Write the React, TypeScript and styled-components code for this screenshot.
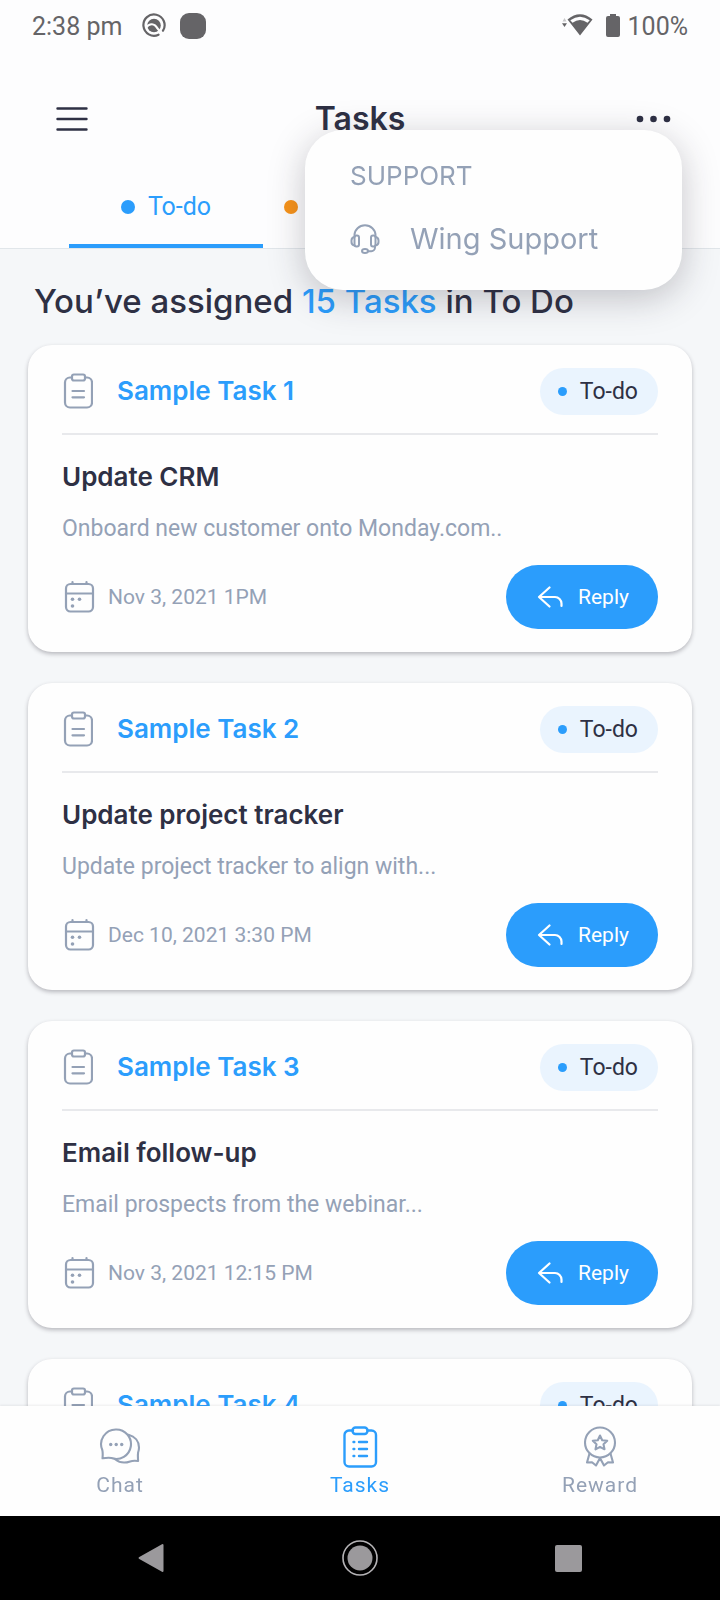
import React from "react";
import styled, { createGlobalStyle } from "styled-components";

const blue = "#2b9dfc";
const ink = "#2e3044";
const muted = "#94a1b6";
const display = `Inter, "Liberation Sans", sans-serif`;

const GlobalStyle = createGlobalStyle`
  *, *::before, *::after { box-sizing: border-box; }
  body { margin: 0; font-family: Roboto, "Liberation Sans", sans-serif; color: ${ink}; background: #fdfdfe; }
  button { border: 0; padding: 0; background: none; font: inherit; color: inherit; cursor: pointer; }
  h1, h2, h3, p { margin: 0; }
  svg { display: block; flex: none; }
`;

const Screen = styled.div`
  display: flex;
  flex-direction: column;
  height: 100vh;
  overflow: hidden;
`;

const StatusBar = styled.div`
  display: flex;
  align-items: center;
  justify-content: space-between;
  height: 52px;
  padding: 0 32px;
  font-size: 25px;
  color: #656467;
`;

const StatusGroup = styled.div<{ $gap: number }>`
  display: flex;
  align-items: center;
  gap: ${({ $gap }) => $gap}px;
`;

const Header = styled.header`
  position: relative;
  z-index: 2;
  border-bottom: 1px solid #e1e6ea;
`;

const AppBar = styled.div`
  display: grid;
  grid-template-columns: 48px 1fr 48px;
  align-items: center;
  height: 134px;
  padding: 0 48px;
`;

const IconButton = styled.button<{ $width?: number }>`
  display: grid;
  place-items: center;
  justify-self: ${({ $width }) => ($width ? "end" : "auto")};
  width: ${({ $width = 48 }) => $width}px;
  height: 48px;
`;

const Title = styled.h1`
  font: 600 32px/40px ${display};
  text-align: center;
`;

const Tabs = styled.div`
  display: flex;
  padding-left: 69px;
`;

const Tab = styled.button<{ $active?: boolean }>`
  display: flex;
  align-items: center;
  justify-content: ${({ $active }) => ($active ? "center" : "flex-start")};
  gap: 13px;
  width: 194px;
  height: 62px;
  padding: 6px 21px 22px;
  border-bottom: 4px solid ${({ $active }) => ($active ? blue : "transparent")};
  font-size: 25px;
  line-height: 30px;
  color: ${blue};
`;

const Dot = styled.span<{ $size: number; $color: string }>`
  flex: none;
  width: ${({ $size }) => $size}px;
  height: ${({ $size }) => $size}px;
  border-radius: 50%;
  background: ${({ $color }) => $color};
`;

const Menu = styled.div`
  position: absolute;
  top: 78px;
  right: 38px;
  width: 377px;
  padding: 28px 45px 31px;
  border-radius: 38px;
  background: #fefefe;
  box-shadow: 0 8px 36px rgba(40, 36, 50, 0.26);
  color: ${muted};
`;

const MenuHeading = styled.h2`
  font: 400 26px/36px ${display};
`;

const MenuItem = styled.button`
  display: flex;
  align-items: center;
  gap: 30px;
  margin-top: 25px;
  font: 400 29px/40px ${display};
`;

const Content = styled.main`
  flex: 1;
  min-height: 0;
  overflow-y: auto;
  scrollbar-width: none;
  padding: 32px 28px 0;
  background: #f5f7f9;
`;

const Summary = styled.h2`
  padding: 0 6px;
  margin-bottom: 24px;
  font: 500 33px/40px ${display};
`;

const Accent = styled.span`
  color: ${blue};
`;

const CardList = styled.div`
  display: flex;
  flex-direction: column;
  gap: 31px;
`;

const Card = styled.article`
  padding: 0 34px 23px;
  border-radius: 24px;
  background: #fefefe;
  box-shadow: 0 2px 4px rgba(40, 36, 50, 0.3);
`;

const CardHeader = styled.div`
  display: flex;
  align-items: center;
  gap: 24px;
  height: 90px;
  padding-top: 4px;
  border-bottom: 2px solid #e8e9ec;
`;

const CardName = styled.h3`
  flex: 1;
  font: 600 26px/36px ${display};
  color: ${blue};
`;

const Badge = styled.span`
  display: flex;
  align-items: center;
  gap: 13px;
  height: 47px;
  padding: 0 20px 0 18px;
  border-radius: 24px;
  background: #eaf4fe;
  font-size: 23px;
`;

const CardTitle = styled.p`
  margin-top: 24px;
  font: 600 26px/36px ${display};
`;

const Description = styled.p`
  margin-top: 18px;
  font-size: 23px;
  line-height: 32px;
  color: ${muted};
`;

const CardFooter = styled.div`
  display: flex;
  align-items: center;
  justify-content: space-between;
  margin-top: 20px;
`;

const DateLabel = styled.div`
  display: flex;
  align-items: center;
  gap: 12px;
  font-size: 21px;
  color: ${muted};
`;

const ReplyButton = styled.button`
  display: flex;
  align-items: center;
  justify-content: center;
  gap: 15px;
  width: 152px;
  height: 64px;
  padding-left: 2px;
  border-radius: 32px;
  background: ${blue};
  font-size: 21px;
  color: #fff;
`;

const BottomNav = styled.nav`
  position: relative;
  display: grid;
  grid-template-columns: repeat(3, 1fr);
  padding: 20px 0 17px;
  background: #fefefe;
  box-shadow: 0 -1px 2px rgba(40, 36, 50, 0.08);
`;

const NavItem = styled.button<{ $active?: boolean }>`
  display: flex;
  flex-direction: column;
  align-items: center;
  gap: 3px;
  font-size: 21px;
  line-height: 28px;
  letter-spacing: 1px;
  color: ${({ $active }) => ($active ? blue : muted)};
`;

const SystemBar = styled.div`
  display: grid;
  grid-template-columns: repeat(3, 29%);
  justify-content: center;
  justify-items: center;
  align-items: center;
  height: 84px;
  background: #000;
`;

const line = { fill: "none", stroke: "currentColor", strokeLinecap: "round", strokeLinejoin: "round" } as const;

const ClipboardIcon = () => (
  <svg width="31" height="36" viewBox="0 0 31 36" {...line} strokeWidth="2.200" color={muted}>
    <path d="M9.500 4.500H8a5 5 0 0 0-5 5v20a5 5 0 0 0 5 5h17a5 5 0 0 0 5-5v-20a5 5 0 0 0-5-5h-2" />
    <rect x="10" y="1.500" width="13" height="6" rx="2" />
    <path d="M10.500 18H22M10.500 24.300H22" />
  </svg>
);

const CalendarIcon = () => (
  <svg width="34" height="34" viewBox="0 0 34 34" {...line} strokeWidth="2.200" color={muted}>
    <rect x="4" y="4" width="27" height="27.500" rx="4.500" />
    <path d="M4 13.500h27M10.500 2v2M24.500 2v2" />
    <g fill="currentColor" stroke="none">
      <circle cx="10.500" cy="19.300" r="1.800" />
      <circle cx="17.500" cy="19.300" r="1.800" />
      <circle cx="10.500" cy="26" r="1.800" />
    </g>
  </svg>
);

const ReplyIcon = () => (
  <svg width="26" height="22" viewBox="0 0 26 22" {...line} strokeWidth="2.200">
    <path d="M12.500 1.500 2 11l10.500 9.500M2 11h16a6.500 6.500 0 0 1 6.500 6.500v2.500" />
  </svg>
);

const HeadsetIcon = () => (
  <svg width="30" height="30" viewBox="0 0 30 30" {...line} strokeWidth="2">
    <path d="M4.500 12.500V11a10.500 9.700 0 0 1 21 0v1.500" />
    <rect x="4.500" y="11.500" width="4.500" height="11" rx="2" />
    <rect x="21" y="11.500" width="4.500" height="11" rx="2" />
    <path d="M4.500 13a3.500 3.500 0 0 0-3 3.500v1.500a3.500 3.500 0 0 0 3 3.500M25.500 13a3.500 3.500 0 0 1 3 3.500v1.500a3.500 3.500 0 0 1-3 3.500M25 22.500v1a3.700 3.700 0 0 1-3.700 3.700H18" />
    <ellipse cx="15" cy="27" rx="3" ry="1.900" />
  </svg>
);

const ChatIcon = () => (
  <svg width="42" height="42" viewBox="0 0 42 42" {...line} strokeWidth="2.100">
    <path d="M17 3.500a14.700 14.700 0 1 1-4.500 28.600c-2.600-.8-5-.4-9 .2.300-3 .5-5.300-.2-8.300A14.700 14.700 0 0 1 17 3.500Z" />
    <path d="M29.500 8.800C36 10.500 40 15.500 40 21.500c0 2-.4 3.500-.9 5-.5 2.700-.1 5.500 0 8.500-3-.3-5.500-.4-8 .4-5.600 2-10.500 1.500-15-2.200" />
    <g fill="currentColor" stroke="none">
      <circle cx="11.700" cy="18.500" r="1.700" />
      <circle cx="17.200" cy="18.500" r="1.700" />
      <circle cx="22.700" cy="18.500" r="1.700" />
    </g>
  </svg>
);

const TasksIcon = () => (
  <svg width="42" height="42" viewBox="0 0 42 42" {...line} strokeWidth="2.400">
    <path d="M14 4.500h-4A4.500 4.500 0 0 0 5.500 9v27a4.500 4.500 0 0 0 4.500 4.500h22.500A4.500 4.500 0 0 0 37 36V9a4.500 4.500 0 0 0-4.500-4.500h-4" />
    <rect x="13.500" y="1.500" width="15" height="6.500" rx="3" />
    <path d="M20 16h8M20 23h8M20 30h8M14.500 16h.8M14.500 23h.8M14.500 30h.8" />
  </svg>
);

const RewardIcon = () => (
  <svg width="42" height="42" viewBox="0 0 42 42" {...line} strokeWidth="2.100">
    <circle cx="21" cy="16.500" r="15" />
    <path d="m21 9.500 2.200 4.700 5 .6-3.700 3.500 1 5-4.500-2.500-4.500 2.500 1-5-3.700-3.500 5-.6Z" />
    <path d="M10.500 27.500 8 36.500l5-.3 4 3.300 4-7.500M31.500 27.500l2.500 9-5-.3-4 3.300-4-7.500" />
  </svg>
);

const tasks = [
  { name: "Sample Task 1", title: "Update CRM", description: "Onboard new customer onto Monday.com..", date: "Nov 3, 2021 1PM" },
  { name: "Sample Task 2", title: "Update project tracker", description: "Update project tracker to align with...", date: "Dec 10, 2021 3:30 PM" },
  { name: "Sample Task 3", title: "Email follow-up", description: "Email prospects from the webinar...", date: "Nov 3, 2021 12:15 PM" },
  { name: "Sample Task 4" },
];

export default function App() {
  return (
    <Screen>
      <GlobalStyle />
      <StatusBar>
        <StatusGroup $gap={20}>
          <span>2:38 pm</span>
          <StatusGroup $gap={14}>
            <svg width="24" height="26" viewBox="0 0 24 26" fill="none" stroke="currentColor" strokeWidth="2.200">
              <path d="M16.500 21.700a10.600 10.600 0 1 1 4.500-4" strokeLinecap="round" />
              <circle cx="12" cy="12.500" r="6.800" fill="currentColor" stroke="none" />
              <path d="M4 14.500c3.500-4.500 8.500-4.500 11.500 1l5 6" stroke="#fdfdfe" />
            </svg>
            <svg width="26" height="26" viewBox="0 0 26 26" fill="currentColor">
              <rect width="26" height="26" rx="9" />
            </svg>
          </StatusGroup>
        </StatusGroup>
        <StatusGroup $gap={8}>
          <svg width="36" height="26" viewBox="0 0 36 26" fill="currentColor">
            <path d="M0 10.300h5L2.500 14Z" />
            <path d="M.5 8.500h4L2.500 5Z" opacity=".35" />
            <path
              fillRule="evenodd"
              d="M18 22.500 5.500 6.500Q18-4 30.500 6.500ZM8.300 7.200l2.200 2.600q7.500-5.500 15 0l2.200-2.600q-9.700-7-19.400 0Z"
            />
          </svg>
          <svg width="14" height="24" viewBox="0 0 14 24" fill="currentColor">
            <path d="M4 0h6v2h2a2 2 0 0 1 2 2v17a2 2 0 0 1-2 2H2a2 2 0 0 1-2-2V4a2 2 0 0 1 2-2h2Z" />
          </svg>
          <span>100%</span>
        </StatusGroup>
      </StatusBar>

      <Header>
        <AppBar>
          <IconButton aria-label="Open navigation">
            <svg width="32" height="26" viewBox="0 0 32 26" {...line} strokeWidth="2.400">
              <path d="M1.500 2.500h29M1.500 13h29M1.500 23.500h29" />
            </svg>
          </IconButton>
          <Title>Tasks</Title>
          <IconButton $width={36} aria-label="More options" aria-expanded="true">
            <svg width="36" height="8" viewBox="0 0 36 8" fill="currentColor">
              <circle cx="4" cy="4" r="3.300" />
              <circle cx="17.500" cy="4" r="3.300" />
              <circle cx="31" cy="4" r="3.300" />
            </svg>
          </IconButton>
        </AppBar>
        <Tabs role="tablist">
          <Tab $active role="tab" aria-selected="true">
            <Dot $size={14} $color={blue} />
            To-do
          </Tab>
          <Tab role="tab" aria-selected="false" aria-label="In progress">
            <Dot $size={14} $color="#f7931a" />
          </Tab>
        </Tabs>
        <Menu>
          <MenuHeading>SUPPORT</MenuHeading>
          <MenuItem>
            <HeadsetIcon />
            Wing Support
          </MenuItem>
        </Menu>
      </Header>

      <Content>
        <Summary>
          You’ve assigned <Accent>15 Tasks</Accent> in To Do
        </Summary>
        <CardList>
          {tasks.map((task) => (
            <Card key={task.name}>
              <CardHeader>
                <ClipboardIcon />
                <CardName>{task.name}</CardName>
                <Badge>
                  <Dot $size={9} $color={blue} />
                  To-do
                </Badge>
              </CardHeader>
              {task.title && (
                <>
                  <CardTitle>{task.title}</CardTitle>
                  <Description>{task.description}</Description>
                  <CardFooter>
                    <DateLabel>
                      <CalendarIcon />
                      {task.date}
                    </DateLabel>
                    <ReplyButton>
                      <ReplyIcon />
                      Reply
                    </ReplyButton>
                  </CardFooter>
                </>
              )}
            </Card>
          ))}
        </CardList>
      </Content>

      <BottomNav>
        <NavItem>
          <ChatIcon />
          Chat
        </NavItem>
        <NavItem $active aria-current="page">
          <TasksIcon />
          Tasks
        </NavItem>
        <NavItem>
          <RewardIcon />
          Reward
        </NavItem>
      </BottomNav>

      <SystemBar>
        <IconButton aria-label="Back">
          <svg width="26" height="30" viewBox="0 0 26 30" fill="#9b999c">
            <path d="M24 1.200a1 1 0 0 1 1.500 1v25.600a1 1 0 0 1-1.500 1L1.300 16a1.200 1.200 0 0 1 0-2Z" />
          </svg>
        </IconButton>
        <IconButton aria-label="Home">
          <svg width="36" height="36" viewBox="0 0 36 36" fill="#9b999c">
            <circle cx="18" cy="18" r="17" fill="none" stroke="#b5b3b6" strokeWidth="1.600" />
            <circle cx="18" cy="18" r="12.500" />
          </svg>
        </IconButton>
        <IconButton aria-label="Recent apps">
          <svg width="27" height="27" viewBox="0 0 27 27" fill="#9b999c">
            <rect width="27" height="27" rx="2" />
          </svg>
        </IconButton>
      </SystemBar>
    </Screen>
  );
}
